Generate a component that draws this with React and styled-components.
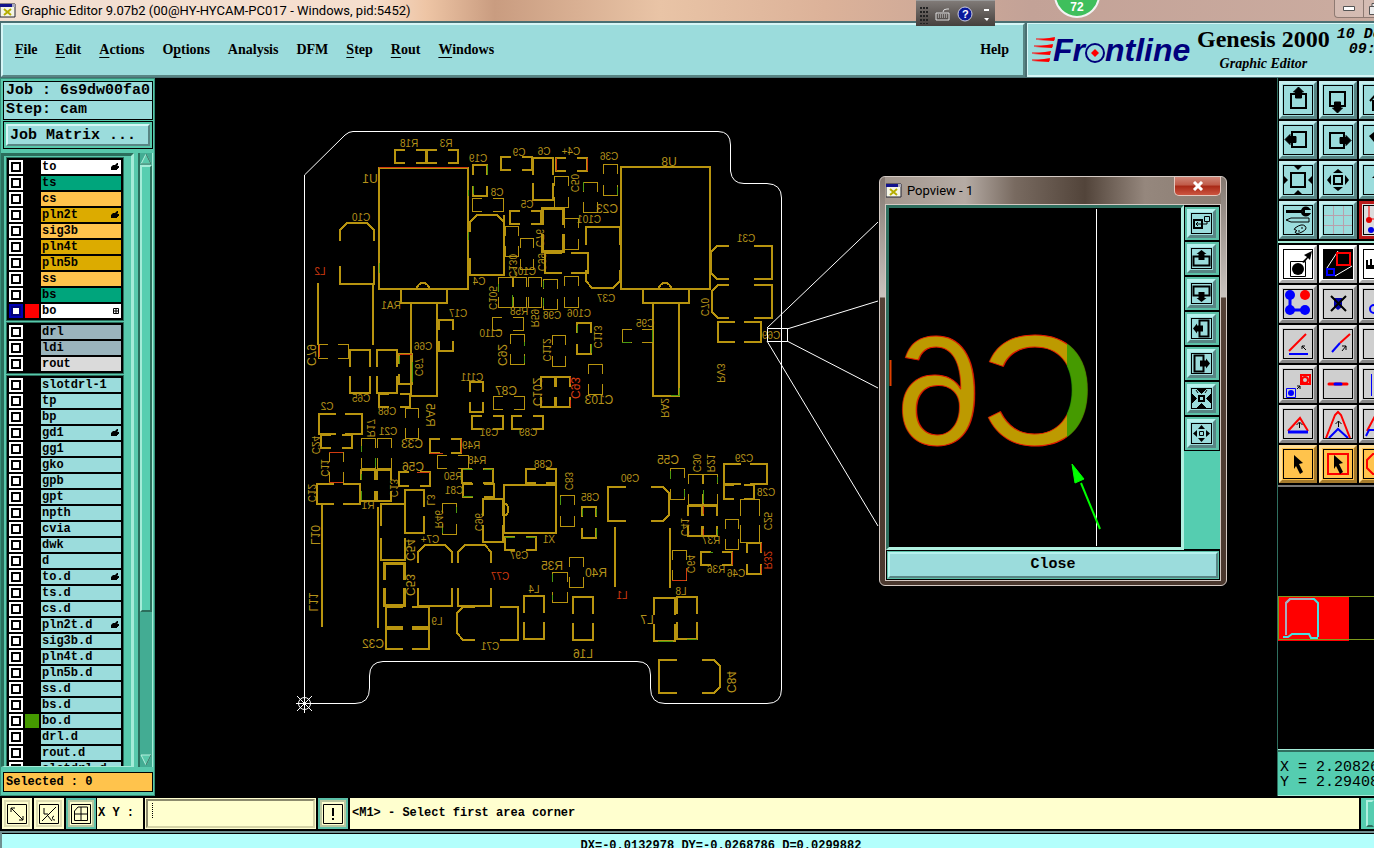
import { useState } from "react";
import styled, { createGlobalStyle, css } from "styled-components";

const GOLD = "#b8940f";
const RED = "#d23a10";
const GREEN = "#4a9a10";

const layerGroups = [
    [
        { name: "to", bg: "#ffffff", mark: "hand" },
        { name: "ts", bg: "#00a57c" },
        { name: "cs", bg: "#ffc34c" },
        { name: "pln2t", bg: "#dcab00", mark: "hand" },
        { name: "sig3b", bg: "#ffc34c" },
        { name: "pln4t", bg: "#dcab00" },
        { name: "pln5b", bg: "#dcab00" },
        { name: "ss", bg: "#ffc34c" },
        { name: "bs", bg: "#00a57c" },
        { name: "bo", bg: "#ffffff", swatch: "#ff0000", active: true, mark: "grid" },
    ],
    [
        { name: "drl", bg: "#9ab4bd" },
        { name: "ldi", bg: "#9ab4bd" },
        { name: "rout", bg: "#dadada" },
    ],
    [
        { name: "slotdrl-1" },
        { name: "tp" },
        { name: "bp" },
        { name: "gd1", mark: "hand" },
        { name: "gg1" },
        { name: "gko" },
        { name: "gpb" },
        { name: "gpt" },
        { name: "npth" },
        { name: "cvia" },
        { name: "dwk" },
        { name: "d" },
        { name: "to.d", mark: "hand" },
        { name: "ts.d" },
        { name: "cs.d" },
        { name: "pln2t.d", mark: "hand" },
        { name: "sig3b.d" },
        { name: "pln4t.d" },
        { name: "pln5b.d" },
        { name: "ss.d" },
        { name: "bs.d" },
        { name: "bo.d", swatch: "#459a00" },
        { name: "drl.d" },
        { name: "rout.d" },
        { name: "slotdrl.d" },
    ],
];

// parts whose outline is open at the top and bottom: x, y, w, h, stroke
const openWide = [
    [395, 150, 31, 13, 2], [427, 150, 31, 13, 2], [472, 198, 31, 13, 1], [501, 157, 31, 13, 2],
    [510, 211, 31, 13, 2], [318, 344, 30, 14, 1], [379, 394, 31, 13, 2], [492, 317, 31, 13, 1],
    [493, 396, 31, 13, 1], [556, 158, 31, 13, 2], [545, 253, 43, 20, 2], [622, 329, 30, 13, 1],
    [718, 322, 43, 20, 2], [319, 414, 43, 20, 2], [321, 435, 31, 13, 2], [317, 484, 43, 20, 2],
    [399, 472, 31, 14, 2], [430, 439, 31, 14, 2], [437, 455, 31, 13, 1], [462, 469, 31, 14, 2],
    [463, 484, 31, 13, 2], [526, 469, 30, 14, 2], [505, 537, 31, 13, 2], [386, 607, 43, 20, 2],
    [386, 629, 43, 20, 2], [472, 416, 31, 13, 2], [512, 416, 31, 13, 2], [724, 464, 43, 20, 2],
    [724, 485, 30, 14, 2], [701, 552, 31, 13, 2],
];

// parts whose outline is open at the sides
const openTall = [
    [473, 165, 14, 31, 2], [533, 158, 20, 42, 2], [350, 350, 20, 43, 2], [377, 350, 20, 43, 2],
    [399, 354, 13, 30, 2], [439, 320, 14, 31, 2], [510, 334, 14, 30, 1], [470, 382, 13, 30, 2],
    [498, 277, 14, 30, 1], [513, 277, 13, 30, 1], [528, 277, 13, 30, 1], [520, 238, 13, 31, 1],
    [505, 226, 13, 30, 1], [542, 208, 21, 43, 3], [554, 176, 14, 31, 1], [583, 182, 14, 30, 1],
    [603, 164, 14, 31, 1], [564, 218, 14, 31, 1], [543, 279, 14, 30, 1], [564, 276, 14, 31, 1],
    [577, 323, 14, 31, 2], [552, 335, 13, 31, 1], [541, 377, 14, 30, 2], [556, 377, 14, 30, 2],
    [588, 364, 14, 30, 1], [329, 452, 14, 30, 1], [361, 438, 14, 30, 1], [361, 470, 14, 31, 2],
    [377, 438, 14, 30, 1], [377, 470, 14, 31, 2], [405, 408, 13, 30, 1], [405, 490, 19, 43, 2],
    [381, 504, 24, 56, 2], [384, 563, 20, 42, 3], [442, 503, 14, 31, 1], [483, 499, 20, 43, 2],
    [524, 596, 20, 43, 2], [560, 495, 14, 31, 1], [582, 507, 14, 31, 2], [670, 468, 14, 31, 1],
    [688, 474, 14, 30, 1], [703, 474, 14, 30, 1], [688, 506, 14, 30, 2], [703, 506, 14, 30, 2],
    [740, 499, 19, 43, 1], [725, 519, 13, 30, 1], [747, 543, 14, 31, 2], [672, 550, 14, 30, 1],
    [552, 572, 15, 30, 1], [569, 557, 14, 30, 1], [573, 597, 20, 43, 2], [654, 598, 21, 43, 2],
    [677, 597, 20, 42, 2],
];

// capacitors with two cut corners, then the solid outlines
const capPaths = [
    "M340 241V230L347 223H367L374 230V241M340 266V284H374V266",
    "M470 232V222L477 215H497L504 222V232M470 258V275H504V258",
    "M586 245V227H620V245M586 270V281L592 288H613L620 281V270",
    "M729 246H717L711 252V273L717 279H729M754 246H772V279H754",
    "M729 285H718L712 291V312L718 318H729M754 285H772V318H754",
    "M418 563V552L425 545H445L452 552V563M418 588V606H452V588",
    "M458 563V552L465 545H485L491 552V563M458 588V606H491V588",
    "M475 607H463L457 613V633L463 640H475M500 607H518V640H500",
    "M626 487H608V521H626M651 487H663L669 493V515L663 521H651",
    "M677 660H659V693H677M702 660H714L720 666V687L714 693H702",
    "M401 289V303H447V289M411 304V396H437V304M417 289A6 6 0 0 1 429 289",
    "M643 289V303H689V289M653 304V396H679V304M659 289A6 6 0 0 1 671 289",
    "M379 167V289H468V167M379 168H468M621 167H710V289H621ZM504 485H556V533H504ZM504 503A7 7 0 0 1 504 516",
    "M318 283V345M373 284V345M322 504V627M378 507V628M615 527V587M670 528V588M504 215V275",
];

const accents = [
    [RED, "M379 167H468M399 354H412M556 158V171M587 158V171M319 345V357M329 452H343M329 482H343M417 472H430M430 453H443M461 439V453M570 377V384M570 400V407M761 543V552M761 565V574M732 552V565M672 580H686M686 568V580M703 506V514M703 529V535"],
    [GREEN, "M468 190V196M468 232V240M379 263V273M399 356V364M412 362V382M487 165V175M473 186V194M583 182V191M617 187V195M498 284V292M512 295V306M524 342V346M524 356V363M543 281V288M543 298V306M577 325V333M591 344V353M622 342H631M652 330V342M671 395H679V388M361 446V452M375 458V467M361 474V480M361 491V500M456 507V513M442 525V533M463 469H473M484 469H493M463 496H473M505 537H515M526 537H536M560 497V505M582 509V516M596 509V516M596 528V537M670 471V479M684 490V497M717 477V483M717 529V535M703 490V503M710 552H713M658 641H673M687 639H697M552 574V582M552 595V600"],
];

// reference designators; r marks the ones turned along the part
const labels = [
    ["R18", 409, 144], ["R3", 446, 144], ["U1", 370, 179, "", 12], ["C19", 478, 159], ["C8", 497, 193],
    ["C9", 519, 153], ["C6", 544, 152], ["C4+", 571, 152], ["C5", 527, 205], ["C10", 361, 218],
    ["C4", 479, 282], ["L2", 320, 272, "", 10, RED], ["C79", 311, 355, "r", 12], ["C65", 361, 399], ["C66", 423, 347],
    ["C67", 418, 367, "r"], ["C68", 387, 412], ["RA1", 391, 306], ["C17", 458, 314], ["C110", 491, 334],
    ["C92", 502, 355, "r", 12], ["C111", 472, 378], ["C87", 506, 391, "", 12], ["C102", 537, 392, "r", 12],
    ["RA5", 430, 415, "r", 12], ["C105", 492, 298, "r"], ["C130", 512, 266, "r"], ["C107", 524, 272],
    ["R59", 534, 318, "r"], ["R58", 519, 312], ["C76", 539, 238, "r"], ["C99", 541, 262, "r"],
    ["C50", 574, 183, "r"], ["C23", 607, 209, "", 12], ["C36", 609, 157], ["C101", 589, 220], ["C37", 606, 299],
    ["C98", 552, 316], ["C106", 579, 314], ["U8", 669, 162, "", 12], ["C95", 645, 324], ["C31", 746, 239],
    ["C70", 704, 307, "r"], ["C69", 771, 336], ["C113", 597, 337, "r"], ["C112", 546, 350, "r"],
    ["C93", 575, 388, "r", 12, RED], ["C103", 599, 400, "", 12], ["RV3", 720, 373, "r"], ["RA2", 664, 408, "r"],
    ["C2", 327, 407], ["C24", 315, 445, "r"], ["C11", 324, 468, "r"], ["C12", 311, 493, "r"], ["R17", 370, 428, "r"],
    ["C21", 388, 432], ["C13", 393, 488, "r"], ["R1", 368, 506], ["C33", 412, 444, "", 12], ["C56", 413, 467, "", 12],
    ["R49", 471, 446], ["R48", 477, 461], ["R50", 453, 477], ["C81", 454, 491], ["L3", 430, 500, "r"],
    ["C54", 410, 550, "r", 12], ["C53", 410, 585, "r", 12], ["R46", 438, 519, "r"], ["C96", 478, 522, "r"],
    ["X1", 549, 540], ["C88", 543, 465], ["C7+", 430, 540], ["C77", 500, 577, "", 10, RED], ["C97", 519, 556],
    ["L10", 315, 535, "r", 12], ["L11", 313, 602, "r", 12], ["L9", 437, 622], ["C32", 373, 644, "", 12], ["C71", 490, 647],
    ["L4", 534, 590], ["C91", 489, 433], ["C89", 528, 433], ["C83", 568, 481, "r"], ["C85", 590, 498],
    ["C90", 630, 479], ["C55", 668, 460, "", 12], ["C30", 696, 463, "r"], ["R21", 710, 463, "r"],
    ["C41", 684, 527, "r"], ["R37", 711, 541], ["C29", 744, 459], ["C28", 766, 493], ["C25", 767, 521, "r"],
    ["R32", 767, 560, "r", 10, RED], ["R36", 716, 570], ["C46", 736, 574], ["C64", 690, 564, "r"],
    ["L1", 622, 596, "", 10, RED], ["R35", 552, 566, "", 12], ["R40", 596, 573, "", 12], ["L16", 583, 654, "", 12],
    ["L7", 647, 620, "", 12], ["L8", 681, 592], ["C84", 731, 682, "r", 12],
];

// the bigger packages have longer corner arms
const arm = (size) => Math.round(size * (size < 40 ? 0.33 : 0.4));

const wide = ([x, y, w, h]) => {
    const a = arm(w);
    return `M${x + a} ${y}H${x}V${y + h}H${x + a}M${x + w - a} ${y}H${x + w}V${y + h}H${x + w - a}`;
};

const tall = ([x, y, w, h]) => {
    const a = arm(h);
    return `M${x} ${y + a}V${y}H${x + w}V${y + a}M${x} ${y + h - a}V${y + h}H${x + w}V${y + h - a}`;
};

const Board = () => {
    return (
        <BoardSvg>
            {/* drawing units start at the window corner */}
            <g transform="translate(-155 -78)" fill="none">
                <g stroke={GOLD} shapeRendering="crispEdges">
                    {openWide.map((p) => <path key={p.join()} d={wide(p)} strokeWidth={p[4]} />)}
                    {openTall.map((p) => <path key={p.join()} d={tall(p)} strokeWidth={p[4]} />)}
                    {capPaths.map((d) => <path key={d} d={d} strokeWidth="2" />)}
                    {accents.map(([color, d]) => <path key={color} d={d} stroke={color} strokeWidth="1" />)}
                </g>
                {labels.map(([text, x, y, turn, size, color]) => (
                    <Designator
                        key={text + x}
                        fill={color || "#b5921a"}
                        fontSize={size || 10}
                        transform={`translate(${x} ${y}) rotate(${turn ? 90 : 0}) scale(-1 1)`}
                        y={size === 12 ? 4 : 3}
                    >
                        {text}
                    </Designator>
                ))}
                <g stroke="#fff" strokeWidth="1">
                    <path d="M304.500 703V175L345 135Q349 131.500 353 131.500H718Q730.500 131.500 730.500 145V171Q732 183.500 744 183.500H767Q781.500 184 781.500 198V689Q781.500 703.500 767 703.500H665Q650.500 703.500 650.500 688V675Q650.500 661.500 637 661.500H383Q369.500 662 369.500 676V688Q369.500 703.500 355 703.500H304" />
                    <path d="M767.500 328.500H787.500V341.500H767.500ZM767 328L878 222M787 329L878 301M787 341L878 388M767 341L878 526" />
                    <circle cx="304.500" cy="703.500" r="6" />
                    <path d="M296 703.500H313M304.500 694V713M297 696L312 711M312 696L297 711" />
                </g>
            </g>
        </BoardSvg>
    );
};

// direction icons share one drawing, turned as needed
const panUp = <g><path d="M8 9h15v14H8z" fill="none" stroke="#000" strokeWidth="2" /><path d="M15.500 2l5 5h-2v6h-6V7h-2z" stroke="#000" /></g>;
const turned = (deg) => <g transform={`rotate(${deg} 15 15)`}>{panUp}</g>;

const icons = {
    up: turned(0),
    down: turned(180),
    left: turned(-90),
    right: turned(90),
    home: <path d="M7 16L16 6h4l8 10M10 15v10h16V15M13 16h5v3h-5z" fill="none" stroke="#000" strokeWidth="2" />,
    undo: <path d="M6 11l5-4v3c8-1 12 3 12 8s-3 7-8 7v-3c4 0 3-8-4-8v3z" />,
    shrink: <g><path d="M8 8h14v14H8z" fill="none" stroke="#000" strokeWidth="2" /><path d="M11 1h8l-4 4zM11 29h8l-4-4zM1 11v8l4-4zM29 11v8l-4-4z" /></g>,
    grow: <g><path d="M11 11h8v8h-8z" fill="none" stroke="#000" strokeWidth="2" /><path d="M10 8h10l-5-4zM10 22h10l-5 4zM8 10v10l-4-5zM22 10v10l4-5z" /></g>,
    top: <path d="M9 13l6-6 6 6h-4v9h-4v-9z" />,
    tools: (
        <g fill="none" stroke="#000">
            <path d="M3 6.500h16" strokeWidth="3" />
            <path d="M26 4a4 4 0 1 0 0 5h-5V4z" strokeWidth="2" />
            <path d="M3 15l5-2h18v4H8z" />
            <path d="M12 23q7-5 10-2t-3 6-7 0q3-1 1-2-3 0-1-2zM15 26h2M19 22v2" />
        </g>
    ),
    grid: <path d="M10.500 1v28M20.500 1v28M1 10.500h28M1 20.500h28" stroke="#b8a0ac" />,
    net: <g><path d="M6 1v13h22M8 25h18" stroke="#f00" fill="none" /><circle cx="6" cy="15" r="3" fill="#e00000" /><circle cx="8" cy="25" r="3" fill="#0000e8" /><path d="M11 5l4 3v-4" fill="#0000e8" /></g>,
    select: <g><path d="M7.500 12.500h15v15h-15z" fill="none" stroke="#000" /><circle cx="15" cy="20" r="6" /><path d="M19 13l5-5-3-2 8-4-2 9-2-2-4 5z" /></g>,
    zoomArea: <g><path d="M0 0h30v30H0z" /><path d="M15 2L4 19M29 17L12 27" stroke="#fff" fill="none" /><path d="M14 4h13v12H14z" fill="none" stroke="#f00" strokeWidth="2" /><path d="M4 20h7v6H4z" fill="none" stroke="#00f" strokeWidth="2" /></g>,
    ruler: <path d="M3 20V11h2v5h2v-6h2v6h3V9h3v7h3V9h3v7h3V9h3v11z" />,
    corner: <g><path d="M7 6v15h16" fill="none" stroke="#00f" strokeWidth="3" /><g fill="#00f"><circle cx="7" cy="6" r="5" /><circle cx="7" cy="21" r="5" /><circle cx="22" cy="21" r="5" /></g><circle cx="22" cy="6" r="5" fill="#f00" /></g>,
    cross: <g><path d="M11 9h8v9l-4 3-4-3z" fill="#00a" /><path d="M8 7l15 15M23 7L8 22" stroke="#000" strokeWidth="2" /></g>,
    ring: <circle cx="11" cy="20" r="4" fill="none" stroke="#00f" strokeWidth="2" />,
    angle: <g fill="none"><path d="M6 22L23 5" stroke="#f00" strokeWidth="2" /><path d="M6 25h19" stroke="#00f" strokeWidth="2" /><path d="M23 21l-4-4v3m0-3h3" stroke="#000" /></g>,
    line: <g fill="none" strokeWidth="2"><path d="M17 14l10-9" stroke="#f00" /><path d="M9 23l8-9" stroke="#00f" /><path d="M19 22l4-5v4m0-4h-4" stroke="#000" strokeWidth="1" /></g>,
    dot: <path d="M13 24v-3h3z" />,
    move: <g fill="none"><path d="M18 2h9v9h-9z" stroke="#f00" strokeWidth="2" transform="translate(0 4)" /><circle cx="22" cy="11" r="3" stroke="#f00" strokeWidth="2" /><path d="M3.500 19.500h9v9h-9z" stroke="#00f" /><circle cx="8" cy="24" r="3" fill="#00f" /><path d="M14 20l3-3m0 3v-3h-3" stroke="#000" /></g>,
    segment: <g strokeWidth="3" strokeLinecap="round"><path d="M6 15h18" stroke="#f00" /><path d="M12 15h6" stroke="#00f" /></g>,
    gap: <path d="M8.500 5v22M11 15h18M15 11l-4 4 4 4" fill="none" stroke="#00f" />,
    bend: <g fill="none" strokeWidth="2"><path d="M5 22L17 9l8 13" stroke="#f00" /><path d="M5 23h20" stroke="#00f" strokeWidth="3" /><path d="M16.500 19v-5m-3 2l3-3 3 3" stroke="#000" strokeWidth="1" /></g>,
    peak: <g fill="none" strokeWidth="2"><path d="M3 29L12 6l3-3 3 3 9 23" stroke="#f00" /><path d="M6 29l9-9 10 9" stroke="#00f" /><path d="M15.500 18v-6m-3 3l3-3 3 3" stroke="#000" strokeWidth="1" /></g>,
    arc: <g fill="none" strokeWidth="2"><path d="M4 22L13 5h6" stroke="#f00" /><path d="M3 27l3-6h15" stroke="#00f" /></g>,
    pointer: <path d="M11 6l9 8-4 1 4 8-3 2-4-8-2 3z" />,
    pointerBox: <g><path d="M5 5h20v20H5z" fill="none" stroke="#f00" strokeWidth="2" /><path d="M11 6l9 8-4 1 4 8-3 2-4-8-2 3z" /></g>,
    pointerPoly: <path d="M10 5h10l6 6v8l-6 6H10l-6-6v-8z" fill="none" stroke="#f00" strokeWidth="2" />,
};

// the popview buttons are smaller and drawn on their own 21 unit grid
const popUp = <g><path d="M2.500 8.500h16v9h-16z" fill="none" stroke="#000" strokeWidth="2" /><path d="M10.500 2l5 4h-2v6h-6V6h-2z" /></g>;
const popTurned = (deg) => <g transform={`rotate(${deg} 10.5 10.5)`}>{popUp}</g>;

const popIcons = {
    link: <g fill="none" stroke="#000"><path d="M3 7h8v8H3z" strokeWidth="2" /><path d="M13.500 3.500h5v5h-5zM16 8v3h-5M5 11h5m-3-2l-2 2 2 2" /></g>,
    up: popTurned(0),
    down: popTurned(180),
    left: popTurned(-90),
    right: popTurned(90),
    shrink: <g><path d="M8 8h5v5H8z" fill="none" stroke="#000" strokeWidth="2" /><path d="M6 1h9l-4.500 4.500zM6 20h9l-4.500-4.500zM1 6v9l4.500-4.500zM20 6v9l-4.500-4.500zM5 2l2 3M16 2l-2 3" stroke="#000" /></g>,
    grow: <g><path d="M8.500 8.500h4v4h-4z" fill="none" stroke="#000" /><path d="M7 6h7l-3.500-4zM7 15h7l-3.500 4zM6 7v7l-4-3.500zM15 7v7l4-3.500z" /></g>,
};

const viewTools = [
    ["up", "down", "home"],
    ["left", "right", "undo"],
    ["shrink", "grow", "top"],
    ["tools", "grid", "net"],
];

const editTools = [
    ["white", "select", "zoomArea", "ruler"],
    ["grey", "corner", "cross", "ring"],
    ["grey", "angle", "line", "dot"],
    ["grey", "move", "segment", "gap"],
    ["grey", "bend", "peak", "arc"],
    ["orange", "pointer", "pointerBox", "pointerPoly"],
];

const WindowIcon = () => (
    <svg width="16" height="16" viewBox="0 0 16 16">
        <path d="M0 1h15v13H0z" fill="#f5f5e6" stroke="#223" />
        <path d="M0 1h15v3H0z" fill="#12128c" />
        <path d="M12 1h3v3h-3z" fill="#aab" />
        <path d="M4 6l7 6M11 6l-7 6" stroke="#b5ad00" strokeWidth="2" />
    </svg>
);

const Mark = ({ kind }) => {
    if (kind === "hand") {
        return <svg width="8" height="8" viewBox="0 0 8 8"><path d="M0 4l2-2h2l2-2h1v2l-1 1h2v2H7v1H6v1H3L0 7z" /></svg>;
    }
    if (kind === "grid") {
        return <svg width="6" height="6" viewBox="0 0 6 6"><path d="M.500.500h5v5h-5zM.500 3h5M3 .500v5" fill="none" stroke="#000" /></svg>;
    }
    return null;
};

const Logo = () => (
    <svg width="162" height="44" viewBox="0 0 162 44" role="img" aria-label="Frontline">
        <path d="M6 12L23 9l-1 4zM3 19l18-3-1 4zM1 26l18-3-1 4zM0 33l18-3-1 4z" fill="#f00" />
        <path d="M4 11h19M2 18h19M0 25h18M0 32h18" stroke="#f00" />
        <LogoText x="21" y="33">Fr</LogoText>
        <LogoText x="73" y="33">ntline</LogoText>
        <circle cx="63" cy="25" r="9" fill="none" stroke="#00007c" strokeWidth="2" />
        <path d="M63 21l4 4-4 4-4-4z" fill="#f00" />
    </svg>
);

const LayerRow = ({ layer }) => {
    const [on, setOn] = useState(false);
    return (
        <Row>
            <LayerCheck checked={on} onChange={() => setOn(!on)} $active={layer.active} />
            <Swatch $color={layer.swatch} />
            <LayerName $bg={layer.bg}>
                <span>{layer.name}</span>
                <Mark kind={layer.mark} />
            </LayerName>
        </Row>
    );
};

const Popview = () => (
    <PopWindow>
        <PopTitle>
            <WindowIcon />
            <span>Popview - 1</span>
            <PopX aria-label="Close window">
                <svg width="12" height="10" viewBox="0 0 12 10"><path d="M2 1l8 8M10 1L2 9" stroke="#fff" strokeWidth="3" /></svg>
            </PopX>
        </PopTitle>
        <PopContent>
            <PopBody>
                <PopCanvas>
                    <svg width="100%" height="100%">
                        <defs>
                            {/* green past the board edge, gold inside it */}
                            <linearGradient id="inkFill" gradientUnits="userSpaceOnUse" x1="0" y1="0" x2="56" y2="0">
                                <stop offset="0.5" stopColor="#459a00" />
                                <stop offset="0.5" stopColor="#bd9a00" />
                            </linearGradient>
                            <linearGradient id="inkEdge" gradientUnits="userSpaceOnUse" x1="0" y1="0" x2="56" y2="0">
                                <stop offset="0.5" stopColor="#459a00" />
                                <stop offset="0.5" stopColor="#e01c00" />
                            </linearGradient>
                        </defs>
                        <PopText transform="translate(206 236) scale(-1 1)" fill="url(#inkFill)" stroke="url(#inkEdge)">C6</PopText>
                        <path d="M1.500 152v26" stroke="#e04000" strokeWidth="2" />
                        <path d="M207.500 1v337" stroke="#fff" />
                        <path d="M211 321L192 275" stroke="#00ff00" strokeWidth="2" />
                        <path d="M183 256l12 15-9 4z" fill="#00ff00" stroke="#00ff00" />
                    </svg>
                </PopCanvas>
                <PopTools>
                    {Object.keys(popIcons).map((name) => (
                        <PopToolCell key={name}>
                            <PopToolButton aria-label={name}>
                                <svg width="21" height="21" viewBox="0 0 21 21">{popIcons[name]}</svg>
                            </PopToolButton>
                        </PopToolCell>
                    ))}
                </PopTools>
            </PopBody>
            <PopFooter>
                <CloseButton>Close</CloseButton>
            </PopFooter>
        </PopContent>
    </PopWindow>
);

const App = () => {
    return (
        <Page>
            <GlobalStyle />
            <TitleBar>
                <WindowIcon />
                <span>Graphic Editor 9.07b2 (00@HY-HYCAM-PC017 - Windows, pid:5452)</span>
                <ImeBar>
                    <svg width="79" height="25" viewBox="0 0 79 25">
                        <path d="M5 6v17M8 6v17M11 6v17" stroke="#222" strokeWidth="2" strokeDasharray="2 2" />
                        <path d="M20 12h13v7H20zM27 11q0-3 4-3h2" fill="none" stroke="#ddd" />
                        <path d="M22 14h10M22 16h10" stroke="#ddd" strokeDasharray="1 1" />
                        <circle cx="49" cy="13" r="7" fill="#0a1a9c" stroke="#ccd" />
                        <path d="M68 8h5v2h-5zM68 17h5l-2 3z" fill="#fff" />
                        <HelpMark x="46" y="17">?</HelpMark>
                    </svg>
                </ImeBar>
                <Badge>72</Badge>
                <WindowButtons>
                    <button aria-label="Minimize"><svg width="12" height="5"><path d="M.500.500h11v4H.500z" fill="#fff" stroke="#555" /></svg></button>
                    <button aria-label="Maximize"><svg width="12" height="12"><path d="M.500 3.500h8v8h-8zM3 3V.500h8V9H9" fill="#eee" stroke="#555" /></svg></button>
                </WindowButtons>
            </TitleBar>

            <Header>
                <MenuBar>
                    <MenuItem><u>F</u>ile</MenuItem>
                    <MenuItem><u>E</u>dit</MenuItem>
                    <MenuItem><u>A</u>ctions</MenuItem>
                    <MenuItem>O<u>p</u>tions</MenuItem>
                    <MenuItem>Analysis</MenuItem>
                    <MenuItem>DFM</MenuItem>
                    <MenuItem><u>S</u>tep</MenuItem>
                    <MenuItem><u>R</u>out</MenuItem>
                    <MenuItem><u>W</u>indows</MenuItem>
                    <MenuItem $end>Help</MenuItem>
                </MenuBar>
                <Brand>
                    <Logo />
                    <BrandText>
                        <h1>Genesis 2000</h1>
                        <p>Graphic Editor</p>
                    </BrandText>
                    <Clock>
                        <span>10 Dec</span>
                        <span>09:4</span>
                    </Clock>
                </Brand>
            </Header>

            <Main>
                <SidePanel>
                    <InfoBox>Job : 6s9dw00fa0</InfoBox>
                    <InfoBox>Step: cam</InfoBox>
                    <MatrixFrame>
                        <MatrixButton>Job Matrix ...</MatrixButton>
                    </MatrixFrame>
                    <LayerArea>
                        <LayerList>
                            {layerGroups.map((group) => (
                                <LayerGroup key={group[0].name}>
                                    {group.map((layer) => <LayerRow key={layer.name} layer={layer} />)}
                                </LayerGroup>
                            ))}
                        </LayerList>
                        <ScrollBar>
                            <svg width="12" height="12" viewBox="0 0 12 12"><path d="M6 1l5 10H1z" fill="#59c9ab" stroke="#b6f0dd" /><path d="M6 1l5 10H1" fill="none" stroke="#2b6e5c" /></svg>
                            <ScrollThumb />
                            <svg width="12" height="12" viewBox="0 0 12 12"><path d="M1 1h10L6 11z" fill="#59c9ab" stroke="#b6f0dd" /><path d="M11 1L6 11" stroke="#2b6e5c" /></svg>
                        </ScrollBar>
                    </LayerArea>
                    <SelectedBox>Selected : 0</SelectedBox>
                </SidePanel>

                <Canvas>
                    <Board />
                    <Popview />
                </Canvas>

                <ToolPanel>
                    <ToolGrid>
                        {viewTools.flat().map((name) => (
                            <ToolButton key={name} aria-label={name} $tone={name === "net" ? "alert" : "teal"}>
                                <svg width="28" height="28" viewBox="1 1 28 28">{icons[name]}</svg>
                            </ToolButton>
                        ))}
                    </ToolGrid>
                    <ToolGrid $dark>
                        {editTools.map(([tone, ...names]) => names.map((name) => (
                            <ToolButton key={name} aria-label={name} $tone={tone}>
                                <svg width="28" height="28" viewBox="1 1 28 28">{icons[name]}</svg>
                            </ToolButton>
                        )))}
                    </ToolGrid>
                    <Overview>
                        <svg width="100%" height="100%">
                            <path d="M0 109h71v45H0z" fill="#ff0000" />
                            <path d="M.500 109.500H120M.500 109.500V152.500H120" fill="none" stroke="#7f9a1c" />
                            <path d="M8 148V116l4-4h24l4 4v34" fill="none" stroke="#48e0e0" strokeWidth="2" />
                            <path d="M8 148V116l4-4h22" fill="none" stroke="#aab" strokeWidth="2" />
                            <path d="M5 150h5l4-3h17l2 4h7" fill="none" stroke="#48e0e0" strokeWidth="2" />
                        </svg>
                    </Overview>
                    <Coords>
                        <div>X = 2.20826</div>
                        <div>Y = 2.29408</div>
                    </Coords>
                </ToolPanel>
            </Main>

            <CommandBar>
                <CommandButton aria-label="Absolute">
                    <svg width="20" height="20" viewBox="0 0 20 20"><path d="M.500.500h19v19H.500zM4 4l12 12M4 8V4h4M16 12v4h-4" fill="none" stroke="#000" /></svg>
                </CommandButton>
                <CommandButton aria-label="Angle">
                    <svg width="20" height="20" viewBox="0 0 20 20"><path d="M.500.500h19v19H.500zM3 17L17 3M5 4v6h4M9 12l4 5M15 12a2 2 0 1 0 1 4" fill="none" stroke="#000" /></svg>
                </CommandButton>
                <CommandButton aria-label="Grid snap" $on>
                    <svg width="20" height="20" viewBox="0 0 20 20"><path d="M.500.500h19v19H.500zM7 3h9.500v13.500H3.500V7zM10 3v13M3 10h13" fill="none" stroke="#000" /></svg>
                </CommandButton>
                <CoordLabel htmlFor="xy">X Y :</CoordLabel>
                <CoordFrame>
                    <CoordInput id="xy" type="text" />
                    <Caret />
                </CoordFrame>
                <CommandButton aria-label="Message" $on>
                    <svg width="20" height="20" viewBox="0 0 20 20"><path d="M.500.500h19v19H.500z" fill="none" stroke="#000" /><path d="M9 4h2v8H9zM9 14h2v2H9z" /></svg>
                </CommandButton>
                <Message>&lt;M1&gt; - Select first area corner</Message>
                <CommandEnd><i /></CommandEnd>
            </CommandBar>
            <StatusBar>
                <span>DX=-0.0132978 DY=-0.0268786 D=0.0299882</span>
            </StatusBar>
        </Page>
    );
};

const GlobalStyle = createGlobalStyle`
    *{
        box-sizing: border-box;
    }

    body{
        margin: 0;
        background: #000000;
        overflow: hidden;
    }

    button{
        padding: 0;
        color: #000000;
    }

    svg{
        display: block;
        flex: none;
    }
`

const bevel = css`
    border: 2px solid;
    border-color: #d6f6f6 #588584 #588584 #d6f6f6;
`

const mono = css`
    font-family: "Liberation Mono", monospace;
    font-weight: 700;
    white-space: pre;
`

const Page = styled.div`
    height: 100vh;
    display: flex;
    flex-direction: column;
    color: #000000;
`

const TitleBar = styled.div`
    position: relative;
    z-index: 1;
    flex: none;
    height: 21px;
    display: flex;
    align-items: center;
    gap: 5px;
    font: 13px "Roboto", sans-serif;
    background: linear-gradient(90deg, #f1dfd2 0%, #f6dfce 27%, #eec5a5 31%, #c99c80 36%, #e9c4a6 48%, #dcb299 60%, #c3a297 75%, #cbaca0 100%);
`

const ImeBar = styled.div`
    position: absolute;
    left: 916px;
    top: 0;
    border-top: 1px solid #999999;
    background: linear-gradient(#807a77, #45403d);
`

const HelpMark = styled.text`
    font: 700 11px "Liberation Sans", sans-serif;
    fill: #ffffff;
`

const Badge = styled.div`
    position: absolute;
    left: 1054px;
    top: -28px;
    width: 46px;
    height: 46px;
    padding-top: 25px;
    border: 2px solid #f3f3f3;
    border-radius: 50%;
    background: #3fbf5c;
    color: #ffffff;
    font: 700 12px/16px "Liberation Sans", sans-serif;
    text-align: center;
`

const WindowButtons = styled.div`
    margin-left: auto;
    width: 40px;
    height: 18px;
    align-self: flex-start;
    display: flex;
    flex: none;
    overflow: hidden;
    border: 1px solid #8e7a72;
    border-width: 0 0 1px 1px;
    border-radius: 0 0 0 4px;

    button{
        flex: none;
        width: 29px;
        display: flex;
        align-items: center;
        justify-content: center;
        border: none;
        border-right: 1px solid #8e7a72;
        background: rgba(255, 255, 255, 0.2);
    }

    button + button{
        justify-content: flex-start;
        padding-left: 5px;
    }
`

const Header = styled.header`
    flex: none;
    height: 57px;
    display: flex;
    gap: 2px;
    padding: 0 0 1px 1px;
    border-top: 2px solid #4a6f72;
    background: #4a6f72;
`

const MenuBar = styled.nav`
    flex: 1;
    display: flex;
    align-items: center;
    gap: 18px;
    padding: 0 14px 0 12px;
    background: #9bdcdc;
    ${bevel}
`

const MenuItem = styled.button`
    border: none;
    background: none;
    font: 700 14px "Liberation Serif", serif;
    ${({ $end }) => $end && "margin-left: auto;"}

    u{
        text-underline-offset: 3px;
    }
`

const Brand = styled.div`
    flex: 0 0 347px;
    display: flex;
    align-items: center;
    gap: 3px;
    padding-left: 4px;
    overflow: hidden;
    background: #9bdcdc;
    border: 2px solid #d6f6f6;
    border-width: 1px 0 2px 1px;
`

const LogoText = styled.text`
    font: italic 700 32px "Liberation Sans", sans-serif;
    fill: #00007c;
`

const BrandText = styled.div`
    flex: none;
    text-align: center;

    h1{
        margin: 0;
        font: 700 24px/28px "Liberation Serif", serif;
    }

    p{
        margin: 0;
        font: italic 700 14px/22px "Liberation Serif", serif;
    }
`

const Clock = styled.div`
    ${mono}
    flex: none;
    align-self: flex-start;
    display: flex;
    flex-direction: column;
    padding: 3px 0 0 4px;
    font-size: 15px;
    font-style: italic;
    line-height: 15px;

    span + span{
        padding-left: 12px;
    }
`

const Main = styled.main`
    flex: 1;
    min-height: 0;
    display: flex;
    background: #000000;
`

const SidePanel = styled.aside`
    flex: 0 0 155px;
    display: flex;
    flex-direction: column;
    padding: 2px 1px 3px 2px;
    border: 1px solid #38907a;
    margin-bottom: 1px;
    background: #58c9ac;
`

const InfoBox = styled.div`
    ${mono}
    flex: none;
    height: 20px;
    padding-left: 2px;
    border: 1px solid #000000;
    margin-bottom: -1px;
    background: #9bdcdc;
    font-size: 15px;
    line-height: 18px;
`

const MatrixFrame = styled.div`
    flex: none;
    height: 28px;
    display: flex;
    margin: 2px 0 4px;
    padding: 2px;
    border: 1px solid #000000;
`

const MatrixButton = styled.button`
    ${mono}
    ${bevel}
    flex: 1;
    padding-left: 2px;
    background: #9bdcdc;
    font-size: 15px;
    line-height: 15px;
    text-align: left;
`

const LayerArea = styled.div`
    flex: 1;
    min-height: 0;
    display: flex;
    gap: 4px;
    margin-left: -2px;
`

const LayerList = styled.div`
    flex: 1;
    overflow: hidden;
    padding: 2px 8px 0 3px;
    border: solid;
    border-width: 3px 3px 1px 3px;
    border-color: #2b6e5c #a5ecd8 #a5ecd8 #2b6e5c;
`

const LayerGroup = styled.div`
    display: flex;
    flex-direction: column;
    gap: 2px;
    padding: 2px;
    margin-bottom: 3px;
    background: #000000;
    outline: 1px solid #2b6e5c;
`

const Row = styled.label`
    flex: none;
    height: 14px;
    display: flex;
    gap: 2px;
`

const LayerCheck = styled.input.attrs({ type: "checkbox" })`
    appearance: none;
    flex: none;
    width: 14px;
    height: 14px;
    margin: 0;
    background: #ffffff;
    border: 2px solid ${({ $active }) => ($active ? "#0000b4" : "#ffffff")};
    box-shadow: inset 0 0 0 2px ${({ $active }) => ($active ? "#00007a" : "#000000")};
`

const Swatch = styled.span`
    flex: none;
    width: 14px;
    background: ${({ $color }) => $color || "#000000"};
`

const LayerName = styled.span`
    ${mono}
    flex: 1;
    display: flex;
    align-items: center;
    justify-content: space-between;
    padding: 0 2px 0 1px;
    background: ${({ $bg }) => $bg || "#9bdcdc"};
    font-size: 12px;
    line-height: 14px;
`

const ScrollBar = styled.div`
    flex: 0 0 15px;
    display: flex;
    flex-direction: column;
    align-items: center;
    padding-bottom: 1px;
    border-left: 2px solid #2b6e5c;
    border-right: 1px solid #a5ecd8;
    background: #43ac93;
`

const ScrollThumb = styled.div`
    width: 100%;
    flex: 0 0 73%;
    margin-bottom: auto;
    border: 2px solid;
    border-color: #a5ecd8 #2b6e5c #2b6e5c #a5ecd8;
    background: #58ceb0;
`

const SelectedBox = styled.div`
    ${mono}
    flex: none;
    height: 20px;
    margin-top: 5px;
    padding-left: 2px;
    border: 1px solid #000000;
    background: #ffc34c;
    font-size: 12px;
    line-height: 18px;
`

const Canvas = styled.section`
    position: relative;
    flex: 1;
    min-width: 0;
    overflow: hidden;
`

const BoardSvg = styled.svg`
    width: 100%;
    height: 100%;
`

const Designator = styled.text`
    font-family: "Liberation Sans", sans-serif;
    text-anchor: middle;
`

const PopWindow = styled.div`
    position: absolute;
    left: 724px;
    top: 98px;
    width: 348px;
    height: 410px;
    display: flex;
    flex-direction: column;
    padding: 0 5px 4px;
    border: 1px solid #d4cac4;
    border-radius: 6px;
    background: linear-gradient(#84776f 0, #8f857e 20px, #c9c3be 120px, #544136 121px, #4a382e 100%);
`

const PopTitle = styled.div`
    flex: none;
    height: 27px;
    display: flex;
    align-items: center;
    gap: 5px;
    padding-left: 1px;
    font: 13px "Roboto", sans-serif;
    background: linear-gradient(90deg, #a3978e 0, #b5aba4 80px, #786a60 130px, #52443a 200px, #95877d 260px, #8b7d73 100%);
`

const PopX = styled.button`
    align-self: flex-start;
    width: 47px;
    height: 19px;
    margin-left: auto;
    display: flex;
    align-items: center;
    justify-content: center;
    border: 1px solid #e5c7bd;
    border-top: none;
    border-radius: 0 0 5px 5px;
    background: linear-gradient(#cf8577, #c05a48 45%, #a82816 50%, #cc5540);
`

const PopContent = styled.div`
    flex: 1;
    min-height: 0;
    display: flex;
    flex-direction: column;
    border: 1px solid #d4cac4;
    background: #000000;
`

const PopBody = styled.div`
    flex: 1;
    min-height: 0;
    display: flex;
`

const PopCanvas = styled.div`
    flex: 1;
    min-width: 0;
    border: 3px solid;
    border-color: #2f6f5f #b0f0e0 #b0f0e0 #2f6f5f;
    background: #000000;
`

const PopText = styled.text`
    font: 156px "Liberation Sans", sans-serif;
`

const PopTools = styled.div`
    flex: 0 0 36px;
    display: flex;
    flex-direction: column;
    gap: 2px;
    padding: 2px 1px 0;
    margin-bottom: 1px;
    background: linear-gradient(#000000 246px, #55cdb0 246px);
`

const PopToolCell = styled.div`
    flex: none;
    height: 33px;
    padding: 2px;
    background: #5cc0a8;
`

const PopToolButton = styled.button`
    width: 29px;
    height: 29px;
    display: flex;
    align-items: center;
    justify-content: center;
    border: 3px solid;
    border-color: #b6f2ee #588584 #588584 #b6f2ee;
    background: #9bdcdc;

    svg{
        outline: 1px solid #000000;
        outline-offset: -1px;
    }
`

const PopFooter = styled.div`
    flex: none;
    height: 28px;
    display: flex;
    margin: 1px 1px 1px;
    padding: 1px;
    background: #5cc0a8;
`

const CloseButton = styled.button`
    ${mono}
    flex: 1;
    border: 2px solid;
    border-color: #b6f2ee #588584 #588584 #b6f2ee;
    background: #9bdcdc;
    font-size: 15px;
    line-height: 20px;
`

const ToolPanel = styled.aside`
    flex: 0 0 97px;
    display: flex;
    flex-direction: column;
    overflow: hidden;
    border-left: 1px solid #2f6f5f;
    margin-bottom: 1px;
`

const ToolGrid = styled.div`
    flex: none;
    display: grid;
    grid-template-columns: repeat(3, 38px);
    gap: 2px;
    padding: 3px 0 2px 1px;
    background: #000000;
    border-top: ${({ $dark }) => ($dark ? "2px solid #a5ecd8" : "none")};
    ${({ $dark }) => $dark && "padding-top: 2px; border-bottom: 2px solid #777777;"}
`

const tones = {
    teal: ["#9bdcdc", "#c4efef", "#588584"],
    white: ["#ffffff", "#ffffff", "#aaaaaa"],
    grey: ["#cfcfcf", "#e6e6e6", "#858585"],
    orange: ["#ffc34c", "#ffdf9a", "#a57a2c"],
    alert: ["#dcdcdc", "#b81818", "#b81818"],
}

const ToolButton = styled.button`
    width: 38px;
    height: 38px;
    padding: 1px;
    border: 3px solid;
    border-color: ${({ $tone }) => `${tones[$tone][1]} ${tones[$tone][2]} ${tones[$tone][2]} ${tones[$tone][1]}`};
    background: ${({ $tone }) => tones[$tone][0]};

    svg{
        box-sizing: content-box;
        border: 1px solid #000000;
    }
`

const Overview = styled.div`
    flex: 1;
    min-height: 0;
    background: #000000;
`

const Coords = styled.div`
    ${mono}
    flex: none;
    height: 46px;
    padding: 8px 0 0 2px;
    border-top: 2px solid #2f6f5f;
    border-bottom: 1px solid #a5ecd8;
    box-shadow: 0 -1px 0 #a5ecd8;
    background: #55cdb0;
    font-size: 15px;
    font-weight: 400;
    line-height: 15px;
`

const CommandBar = styled.div`
    flex: none;
    height: 34px;
    display: flex;
    gap: 2px;
    padding: 1px 0 2px 2px;
    background: #000000;
`

const CommandButton = styled.button`
    flex: 0 0 30px;
    display: flex;
    align-items: center;
    justify-content: center;
    border: 2px solid ${({ $on }) => ($on ? "#5cc0a8" : "#ffffcf")};
    background: #ffffcf;
    box-shadow: inset 0 0 0 2px ${({ $on }) => ($on ? "#b9c7a0" : "#deddb2")};
`

const CoordLabel = styled.label`
    ${mono}
    flex: 0 0 46px;
    margin-left: -1px;
    padding-left: 1px;
    background: #ffffcf;
    font-size: 12px;
    line-height: 30px;
`

const CoordFrame = styled.div`
    position: relative;
    flex: 0 0 171px;
    display: flex;
    padding: 1px;
    background: #ffffcf;
`

const CoordInput = styled.input`
    ${mono}
    flex: 1;
    min-width: 0;
    padding: 0 6px;
    border: 2px solid;
    border-color: #8c8b6d #d5d4a8 #d5d4a8 #8c8b6d;
    background: #ffffcf;
    font-size: 12px;
    outline: none;
`

const Caret = styled.span`
    position: absolute;
    left: 7px;
    top: 5px;
    height: 15px;
    border-left: 1px dotted #000000;
`

const Message = styled.div`
    ${mono}
    flex: 1;
    padding-left: 2px;
    background: #ffffcf;
    font-size: 12px;
    line-height: 30px;
`

const CommandEnd = styled.div`
    flex: 0 0 13px;
    display: flex;
    padding: 2px 0 2px 5px;
    background: #55cdb0;

    i{
        flex: 1;
        border: 2px solid;
        border-color: #b0f0e0 transparent #2f6f5f #b0f0e0;
    }
`

const StatusBar = styled.footer`
    ${mono}
    flex: none;
    height: 17px;
    padding: 6px 0 0 66px;
    overflow: hidden;
    border-top: 2px solid #6f8f90;
    border-left: 2px solid #6f8f90;
    box-shadow: inset 0 1px 0 #000000;
    background: #b3fffc;
    font-size: 12px;
    line-height: 14px;
    text-align: center;
`

export default App;
